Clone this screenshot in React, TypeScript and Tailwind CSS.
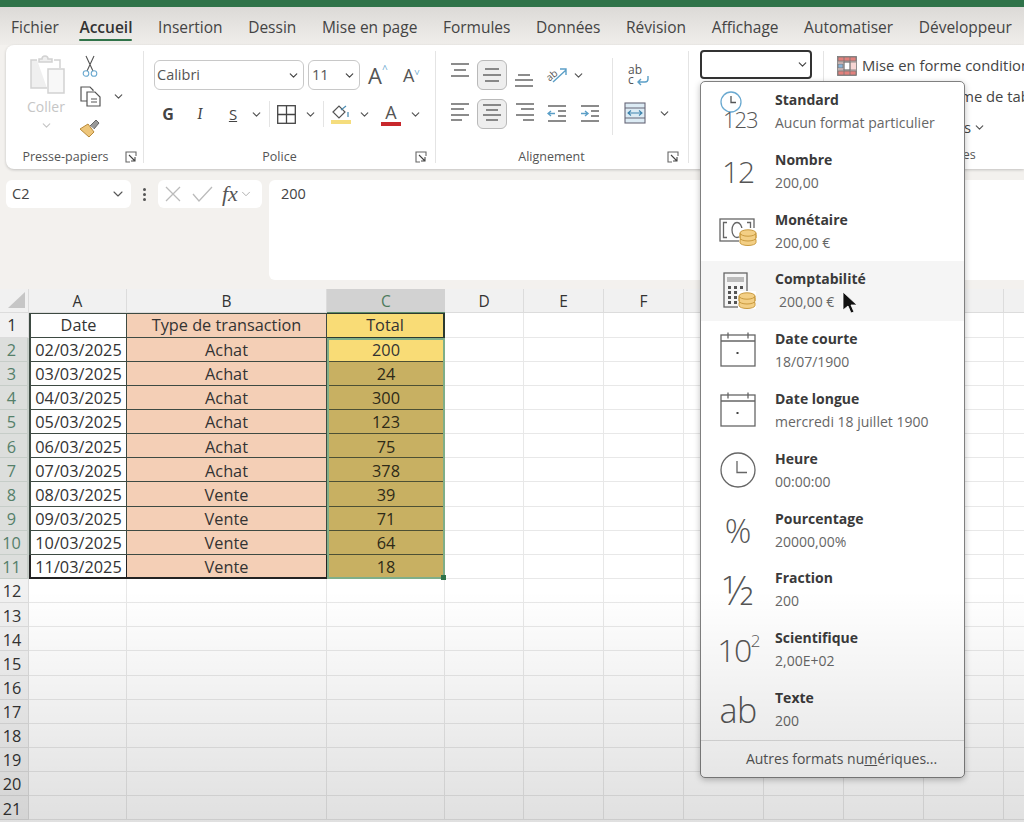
import { ChevronDown } from "lucide-react";

const Chev = ({ className = "text-[#555]" }: { className?: string }) => (
  <ChevronDown size={13} strokeWidth={2.2} className={className} />
);

const Launcher = () => (
  <svg width="12" height="12" viewBox="0 0 12 12" fill="none" stroke="#666" strokeWidth="1.1">
    <path d="M5 1H1v10h4M1 1h10v4" />
    <path d="M4 4l6 6M10 6v4H6" stroke="#444" />
  </svg>
);

// horizontal bars used by the alignment buttons
const Bars = ({ rows, color = "#666" }: { rows: number[][]; color?: string }) => (
  <svg width="20" height="30" viewBox="0 0 20 30" stroke={color} strokeWidth="1.4">
    {rows.map((r, i) => (
      <line key={i} x1={r[0]} x2={r[1]} y1={r[2]} y2={r[2]} />
    ))}
  </svg>
);

const Coins = ({ x, y }: { x: number; y: number }) => (
  <g transform={`translate(${x} ${y})`} fill="#f3cf85" stroke="#c99a3f" strokeWidth="1">
    <path d="M0 13.5a8 3 0 0 0 16 0v-3H0z" />
    <path d="M0 9a8 3 0 0 0 16 0V5.500H0z" />
    <ellipse cx="8" cy="4" rx="8" ry="3.200" />
    <path d="M0 4v5M16 4v5" fill="none" />
  </g>
);

const CalendarIcon = () => (
  <svg width="36" height="36" viewBox="0 0 36 36" fill="none" stroke="#666" strokeWidth="1.300" className="-mt-[2px]">
    <rect x="1" y="3" width="34" height="31" />
    <path d="M1 9h34M8 0.500v6M28 0.500v6" />
    <rect x="16.500" y="20" width="2" height="2" fill="#444" stroke="none" />
  </svg>
);

const CalcIcon = () => (
  <svg width="36" height="38" viewBox="0 0 36 38" fill="none">
    <rect x="4" y="1" width="23" height="34" stroke="#666" strokeWidth="1.300" />
    <rect x="7" y="5" width="17" height="5" fill="#bbb" />
    {[14, 19, 24, 29].map((y) =>
      [8, 14, 20].map((x) => <rect key={`${x}-${y}`} x={x} y={y} width="3" height="3" fill="#555" />)
    )}
    <rect x="18" y="19" width="18" height="18" fill="#fff" />
    <Coins x={19} y={20} />
  </svg>
);

const NoteIcon = () => (
  <svg width="38" height="30" viewBox="0 0 38 30" fill="none">
    <rect x="1" y="3" width="34" height="22" stroke="#666" strokeWidth="1.300" />
    <path d="M8 6.500H4.500v15H8M28 6.500h3.500v15H28" stroke="#666" strokeWidth="1.300" />
    <ellipse cx="18" cy="14" rx="5" ry="7.500" stroke="#666" strokeWidth="1.300" />
    <rect x="20" y="12" width="18" height="18" fill="#fff" />
    <Coins x={21} y={13} />
  </svg>
);

const formats = [
  { t: "Standard", s: "Aucun format particulier" },
  { t: "Nombre", s: "200,00" },
  { t: "Monétaire", s: "200,00 €" },
  { t: "Comptabilité", s: "200,00 €", hover: true },
  { t: "Date courte", s: "18/07/1900" },
  { t: "Date longue", s: "mercredi 18 juillet 1900" },
  { t: "Heure", s: "00:00:00" },
  { t: "Pourcentage", s: "20000,00%" },
  { t: "Fraction", s: "200" },
  { t: "Scientifique", s: "2,00E+02" },
  { t: "Texte", s: "200" },
];

const FormatIcon = ({ name }: { name: string }) => {
  const big = "font-light text-[#555] leading-none";
  switch (name) {
    case "Standard":
      return (
        <div className="relative w-[40px] h-[44px] mt-[2px]">
          <svg width="24" height="24" viewBox="0 0 24 24" fill="none" stroke="#6aa9d0" strokeWidth="1.300" className="absolute left-[2px] top-0">
            <circle cx="11" cy="11" r="10" />
            <path d="M11 5v6.500h5" stroke="#555" />
          </svg>
          <span className={`absolute left-[5px] top-[17px] text-[22px] tracking-[-1px] ${big}`}>123</span>
        </div>
      );
    case "Nombre":
      return <span className={`text-[30px] tracking-[-1px] ${big}`}>12</span>;
    case "Monétaire":
      return <NoteIcon />;
    case "Comptabilité":
      return <CalcIcon />;
    case "Date courte":
    case "Date longue":
      return <CalendarIcon />;
    case "Heure":
      return (
        <svg width="36" height="36" viewBox="0 0 36 36" fill="none" stroke="#666" strokeWidth="1.300" className="-mt-[2px]">
          <circle cx="18" cy="18" r="17" />
          <path d="M17 9v11.500h10" />
        </svg>
      );
    case "Pourcentage":
      return <span className={`text-[33px] ${big}`}>%</span>;
    case "Fraction":
      return <span className={`text-[40px] ${big}`}>½</span>;
    case "Scientifique":
      return (
        <span className={`text-[32px] tracking-[-1.500px] ${big}`}>
          10<sup className="text-[17px] -top-[15px] relative align-baseline">2</sup>
        </span>
      );
    default:
      return <span className={`text-[34px] tracking-[-0.500px] ${big}`}>ab</span>;
  }
};

const tabs = ["Fichier", "Accueil", "Insertion", "Dessin", "Mise en page", "Formules", "Données", "Révision", "Affichage", "Automatiser", "Développeur"];

const rows = [
  ["02/03/2025", "Achat", "200"],
  ["03/03/2025", "Achat", "24"],
  ["04/03/2025", "Achat", "300"],
  ["05/03/2025", "Achat", "123"],
  ["06/03/2025", "Achat", "75"],
  ["07/03/2025", "Achat", "378"],
  ["08/03/2025", "Vente", "39"],
  ["09/03/2025", "Vente", "71"],
  ["10/03/2025", "Vente", "64"],
  ["11/03/2025", "Vente", "18"],
];

const extraCols = [0, 1, 2, 3, 4, 5, 6, 7];

function Ribbon() {
  const sep = <div className="self-center w-px h-[112px] bg-[#e4e4e4] shrink-0" />;
  const label = "flex-1 text-center text-[12.500px] text-[#555]";
  return (
    <div className="ml-[6px] h-[124px] bg-white rounded-l-lg flex shadow-[0_1px_3px_rgba(0,0,0,0.2)] overflow-hidden shrink-0">
      {/* Presse-papiers */}
      <div className="w-[137px] shrink-0 flex flex-col">
        <div className="flex h-[100px]">
          <div className="w-[70px] pl-[10px] pt-[10px] flex flex-col items-center">
            <svg width="36" height="40" viewBox="0 0 36 40" fill="none" stroke="#d2d2d2" strokeWidth="1.500" className="ml-[3px]">
              <path d="M7 5H1v28h16" fill="#efefef" />
              <path d="M24 5h6v8" />
              <path d="M9 7V4h3a3 3 0 0 1 6 0h4v3z" fill="#efefef" />
              <rect x="18" y="14" width="16" height="24" fill="#f8f8f8" />
            </svg>
            <span className="text-[14px] text-[#c6c6c6] mt-[2px] leading-[20px]">Coller</span>
            <Chev className="text-[#c6c6c6] mt-[2px]" />
          </div>
          <div className="flex flex-col pt-[5px]">
            <div className="h-[31px] w-[28px] flex items-center justify-center">
              <svg width="16" height="22" viewBox="0 0 16 22" fill="none" stroke="#555" strokeWidth="1.100">
                <path d="M4 1l7 15M12 1L5 16" />
                <circle cx="4" cy="18.500" r="2.800" stroke="#6aa9d0" />
                <circle cx="12" cy="18.500" r="2.800" stroke="#6aa9d0" />
              </svg>
            </div>
            <div className="h-[31px] flex items-center">
              <div className="w-[28px] flex justify-center">
                <svg width="21" height="21" viewBox="0 0 21 21" fill="none" stroke="#555" strokeWidth="1.200">
                  <path d="M7 15H1V1h9l3 3v1" />
                  <path d="M7 6h8l5 5v9H7z" fill="#fff" />
                  <path d="M11 13h6M11 16h6" />
                </svg>
              </div>
              <div className="w-[12px] ml-[8px]"><Chev /></div>
            </div>
            <div className="h-[31px] w-[28px] flex items-center justify-center">
              <svg width="22" height="20" viewBox="0 0 22 20" fill="none">
                <path d="M1 11l8-5 6 8-5 5z" fill="#eec67a" stroke="#b8893a" />
                <path d="M11 8l6-6 3 3-5 6" fill="#999" stroke="#666" />
              </svg>
            </div>
          </div>
        </div>
        <div className="h-[24px] flex items-center">
          <span className={label}>Presse-papiers</span>
          <div className="w-[18px]"><Launcher /></div>
        </div>
      </div>
      {sep}
      {/* Police */}
      <div className="w-[291px] shrink-0 flex flex-col">
        <div className="pl-[10px] pt-[15px] h-[100px]">
          <div className="flex items-center h-[30px]">
            <div className="w-[150px] h-[30px] border border-[#c8c8c8] rounded-md flex items-center justify-between pl-[2px] pr-[3px] text-[14.500px] text-[#555]">
              Calibri <Chev className="text-[#444]" />
            </div>
            <div className="w-[52px] h-[30px] ml-[4px] border border-[#c8c8c8] rounded-md flex items-center justify-between pl-[3px] pr-[3px] text-[14.500px] text-[#555]">
              11 <Chev className="text-[#444]" />
            </div>
            <div className="w-[22px] ml-[8px] flex items-start text-[#555] text-[22px] leading-none">
              A<span className="text-[#6aa9d0] text-[10px]">^</span>
            </div>
            <div className="w-[20px] ml-[13px] flex items-start text-[#555] text-[18px] leading-none">
              A<span className="text-[#6aa9d0] text-[10px] rotate-180">^</span>
            </div>
          </div>
          <div className="flex items-center h-[30px] mt-[9px] text-[#444]">
            <div className="w-[28px] text-center text-[16px] font-bold">G</div>
            <div className="w-[28px] ml-[4px] text-center text-[16px] italic font-serif">I</div>
            <div className="w-[28px] ml-[5px] text-center text-[15px] underline">S</div>
            <div className="w-[12px] ml-[3px]"><Chev /></div>
            <div className="w-px h-[26px] ml-[7px] bg-[#e4e4e4]" />
            <svg width="19" height="19" viewBox="0 0 19 19" fill="none" stroke="#444" strokeWidth="1.300" className="ml-[7px]">
              <rect x="0.700" y="0.700" width="17.600" height="17.600" />
              <path d="M9.500 1v17M1 9.500h17" />
            </svg>
            <div className="w-[12px] ml-[8px]"><Chev /></div>
            <div className="w-px h-[26px] ml-[7px] bg-[#e4e4e4]" />
            <svg width="20" height="22" viewBox="0 0 20 22" fill="none" className="ml-[7px]">
              <path d="M2 9l6-6 6 6-6 6z" stroke="#555" strokeWidth="1.200" />
              <path d="M10 7l5-4" stroke="#4d8fb5" strokeWidth="1.300" />
              <path d="M17 9v5" stroke="#4d8fb5" strokeWidth="1.300" />
              <rect x="0" y="17" width="20" height="4" fill="#f5dd7d" />
            </svg>
            <div className="w-[12px] ml-[7px]"><Chev /></div>
            <div className="w-[20px] ml-[11px] flex flex-col items-center text-[18px] leading-[19px] text-[#555]">
              A
              <div className="w-[20px] h-[4px] bg-[#c8272c]" />
            </div>
            <div className="w-[12px] ml-[8px]"><Chev /></div>
          </div>
        </div>
        <div className="h-[24px] flex items-center">
          <span className={label}>Police</span>
          <div className="w-[20px]"><Launcher /></div>
        </div>
      </div>
      {sep}
      {/* Alignement */}
      <div className="w-[252px] shrink-0 flex flex-col">
        <div className="h-[100px] flex">
          <div className="w-[176px] pl-[14px] pt-[15px] shrink-0">
            <div className="flex items-center h-[30px]">
              <Bars rows={[[1, 19, 4], [4, 16, 10], [1, 19, 16]]} />
              <div className="w-[30px] h-[30px] ml-[7px] bg-[#eeeeee] border border-[#b9b9b9] rounded-md flex justify-center">
                <Bars rows={[[3, 17, 8], [1, 19, 14], [3, 17, 20]]} />
              </div>
              <div className="ml-[7px]"><Bars rows={[[4, 16, 15], [1, 19, 20], [1, 19, 26]]} /></div>
              <svg width="24" height="24" viewBox="0 0 24 24" fill="none" className="ml-[11px]">
                <text x="1" y="15" fontSize="10" fill="#555" transform="rotate(-40 8 12)" fontFamily="Open Sans">ab</text>
                <path d="M8 19L21 7M15 6h6v6" stroke="#5b9fc7" strokeWidth="1.400" />
              </svg>
              <div className="w-[12px] ml-[3px]"><Chev /></div>
            </div>
            <div className="flex items-center h-[30px] mt-[9px]">
              <Bars rows={[[1, 19, 5], [1, 14, 10], [1, 19, 16], [1, 12, 21]]} />
              <div className="w-[30px] h-[30px] ml-[7px] bg-[#eeeeee] border border-[#b9b9b9] rounded-md flex justify-center">
                <Bars rows={[[1, 19, 5], [4, 16, 10], [1, 19, 15], [4, 16, 20]]} />
              </div>
              <div className="ml-[8px]"><Bars rows={[[1, 19, 5], [6, 19, 10], [1, 19, 16], [8, 19, 21]]} /></div>
              <svg width="20" height="20" viewBox="0 0 20 20" fill="none" stroke="#666" strokeWidth="1.400" className="ml-[12px]">
                <path d="M1 2h18M11 7h8M11 12h8M1 17h18" />
                <path d="M8 9.500H1M4 7L1 9.500 4 12" stroke="#5b9fc7" />
              </svg>
              <svg width="20" height="20" viewBox="0 0 20 20" fill="none" stroke="#666" strokeWidth="1.400" className="ml-[13px]">
                <path d="M1 2h18M11 7h8M11 12h8M1 17h18" />
                <path d="M1 9.500h7M5 7l3 2.500L5 12" stroke="#5b9fc7" />
              </svg>
            </div>
          </div>
          <div className="w-px h-[77px] mt-[13px] bg-[#e4e4e4] shrink-0" />
          <div className="pl-[11px] pt-[20px]">
            <div className="h-[24px] w-[24px] ml-[4px] text-[12px] leading-[10px] text-[#555] relative">
              ab
              <br />c
              <svg width="14" height="12" viewBox="0 0 14 12" fill="none" stroke="#5b9fc7" strokeWidth="1.400" className="absolute left-[8px] top-[10px]">
                <path d="M12 1v3a3 3 0 0 1-3 3H2M5 4L2 7l3 3" />
              </svg>
            </div>
            <div className="flex items-center mt-[12px] h-[24px]">
              <svg width="22" height="22" viewBox="0 0 22 22" fill="#dcebf4" stroke="#667" strokeWidth="1.100">
                <rect x="1" y="1" width="20" height="20" />
                <path d="M1 6h20M1 16h20" />
                <path d="M4 11h14M7 8.500L4 11l3 2.500M15 8.500l3 2.500-3 2.500" stroke="#3d83ad" fill="none" />
              </svg>
              <div className="w-[12px] ml-[12px]"><Chev /></div>
            </div>
          </div>
        </div>
        <div className="h-[24px] flex items-center">
          <span className={label}>Alignement</span>
          <div className="w-[21px]"><Launcher /></div>
        </div>
      </div>
      {sep}
      {/* Nombre */}
      <div className="w-[134px] shrink-0 pl-[11px] pt-[5px]">
        <div className="w-[112px] h-[29px] border-2 border-[#333] rounded-[4px] flex items-center justify-end pr-[1px] bg-white">
          <Chev className="text-[#444]" />
        </div>
      </div>
      {sep}
      {/* Styles */}
      <div className="flex-1 min-w-0 flex flex-col pl-[13px] pt-[5px] whitespace-nowrap text-[14.800px] text-[#444] overflow-hidden">
        <div className="h-[31px] flex items-center gap-[5px]">
          <svg width="20" height="20" viewBox="0 0 20 20" stroke="#777" strokeWidth="0.800" className="shrink-0">
            <rect x="0.500" y="0.500" width="19" height="19" fill="#f6d5d3" />
            <path d="M1 1h18v4H1zM1 15h18v4H1z" fill="#e2807c" />
            <path d="M7 6h6v8H7z" fill="#fff" />
            <path d="M1 8h5v4H1z" fill="#8ab4d8" />
            <path d="M7 1v18M13 1v18M1 6h18M1 14h18" fill="none" />
          </svg>
          <span>Mise en forme conditionnelle</span>
        </div>
        <div className="h-[31px] flex items-center pl-[17px]">Mettre sous forme de tableau</div>
        <div className="h-[31px] flex items-center gap-[2px] pl-[18px]">
          Styles de cellules <Chev />
        </div>
        <div className="h-[24px] flex items-center pl-[105px] text-[12.500px] text-[#555]">Styles</div>
      </div>
    </div>
  );
}

function FormulaBar() {
  return (
    <div className="flex mt-[11px] h-[100px] shrink-0">
      <div className="ml-[6px] w-[125px] h-[28px] bg-white rounded-md flex items-center justify-between pl-[6px] pr-[5px] text-[14.500px] text-[#444]">
        C2 <ChevronDown size={16} strokeWidth={1.600} className="text-[#555]" />
      </div>
      <div className="w-[27px] h-[28px] flex flex-col items-center justify-center gap-[2px]">
        <div className="w-[3px] h-[3px] rounded-full bg-[#555]" />
        <div className="w-[3px] h-[3px] rounded-full bg-[#555]" />
        <div className="w-[3px] h-[3px] rounded-full bg-[#555]" />
      </div>
      <div className="w-[104px] h-[28px] bg-white rounded-md flex items-center pl-[7px]">
        <svg width="16" height="16" viewBox="0 0 16 16" stroke="#bbb" strokeWidth="1.300" fill="none">
          <path d="M1 1l14 14M15 1L1 15" />
        </svg>
        <svg width="22" height="16" viewBox="0 0 22 16" stroke="#bbb" strokeWidth="1.300" fill="none" className="ml-[11px]">
          <path d="M1 8l6 7L20 1" />
        </svg>
        <span className="ml-[8px] font-['Liberation_Serif',serif] italic text-[22px] text-[#555] leading-none">fx</span>
        <ChevronDown size={14} strokeWidth={1.300} className="text-[#999] ml-[1px]" />
      </div>
      <div className="ml-[7px] flex-1 h-[100px] bg-white rounded-l-md pl-[12px] pt-[2px] text-[14.500px] text-[#444] leading-[24px]">200</div>
    </div>
  );
}

function Sheet() {
  const head = "flex items-center justify-center pt-[2px] bg-[#f1f1f1] border-r border-b border-[#dcdcdc] text-[15.500px] text-[#333]";
  const gridline = "border-r border-b border-[#e8e8e8]";
  const dark = "border-r border-b border-[#3d4a42]";
  return (
    <div className="relative mt-[9px] flex-1 content-start grid grid-cols-[29px_98px_200px_118px_79px_80px_80px_80px_80px_80px_80px_80px] grid-rows-[24px_24.600px] auto-rows-[24.150px] text-[16.300px] text-[#333] bg-white">
      <div className="bg-[#f1f1f1] border-r border-b border-[#dcdcdc] flex items-end justify-end pr-[3px] pb-[4px]">
        <div className="w-0 h-0 border-l-[17px] border-l-transparent border-b-[16px] border-b-[#c6c6c6]" />
      </div>
      <div className={head}>A</div>
      <div className={head}>B</div>
      <div className="flex items-center justify-center pt-[2px] bg-[#d2d2d2] border-b border-[#5c8a6a] text-[15.500px] text-[#4d7a5c]">C</div>
      {["D", "E", "F", "G", "H", "I", "J", "K"].map((c) => (
        <div key={c} className={head}>{c}</div>
      ))}

      <div className="flex items-center justify-center bg-[#f1f1f1] border-r border-b border-[#dcdcdc] pr-[4px]">1</div>
      <div className="flex items-center justify-center bg-white border-t border-l-2 border-r border-b border-[#3d4a42]">Date</div>
      <div className={`flex items-center justify-center bg-[#f4cfb6] border-t border-[#3d4a42] ${dark}`}>Type de transaction</div>
      <div className="flex items-center justify-center bg-[#f9dc76] border-t border-r-2 border-b border-[#2c3a30]">Total</div>
      {extraCols.map((c) => <div key={c} className={gridline} />)}

      {rows.map((r, i) => (
        <div key={r[0]} className="contents">
          <div className="flex items-center justify-center pt-[2px] bg-[#dcdedc] border-r-2 border-b border-[#c6cdc8] text-[#55806a] pr-[4px]">{i + 2}</div>
          <div className={`flex items-center justify-center pt-[2px] bg-white border-l-2 border-[#3d4a42] ${i === 9 ? "border-r border-b-2 border-[#222]" : dark}`}>{r[0]}</div>
          <div className={`flex items-center justify-center pt-[2px] bg-[#f4cfb6] ${i === 9 ? "border-r border-b-2 border-[#222]" : dark}`}>{r[1]}</div>
          <div className={`flex items-center justify-center pt-[2px] border-b border-[#4d5034] ${i === 0 ? "bg-[#f9dc76] text-[#333]" : "bg-[#c8b062] text-[#2e2a18]"}`}>{r[2]}</div>
          {extraCols.map((c) => <div key={c} className={gridline} />)}
        </div>
      ))}

      {Array.from({ length: 10 }, (_, i) => i + 12).map((n) => (
        <div key={n} className="contents">
          <div className="flex items-center justify-center pt-[2px] bg-[#f1f1f1] border-r border-b border-[#dcdcdc] pr-[4px]">{n}</div>
          <div className={gridline} />
          <div className={gridline} />
          <div className={gridline} />
          {extraCols.map((c) => <div key={c} className={gridline} />)}
        </div>
      ))}

      {/* selection round C2:C11 */}
      <div className="absolute left-[327px] top-[48.600px] w-[118px] h-[241.500px] border-2 border-[#7fae88] pointer-events-none">
        <div className="absolute -right-[3px] -bottom-[3px] w-[5px] h-[5px] bg-[#2f7349]" />
      </div>
    </div>
  );
}

function FormatMenu() {
  return (
    <div className="absolute left-[700px] top-[81px] w-[265px] h-[697px] bg-white border-[1.500px] border-[#808080] rounded-[5px] shadow-[0_2px_6px_rgba(0,0,0,0.25)] flex flex-col overflow-hidden">
      {formats.map((f) => (
        <div key={f.t} className={`h-[59.800px] shrink-0 flex ${f.hover ? "bg-[#f5f5f5]" : ""}`}>
          <div className="w-[74px] shrink-0 flex items-center justify-center">
            <FormatIcon name={f.t} />
          </div>
          <div className="pt-[8px]">
            <div className="font-bold text-[#3a3a3a] leading-[20px] text-[14px]">{f.t}</div>
            <div className={`text-[#666] leading-[20px] mt-[3px] text-[14px] ${f.hover ? "pl-[4px]" : ""}`}>{f.s}</div>
          </div>
        </div>
      ))}
      <div className="border-t border-[#dedede] flex-1 flex items-center justify-center pl-[18px] pb-[1px] text-[#555] text-[14px]">
        <span>
          Autres formats nu<span className="underline">m</span>ériques...
        </span>
      </div>
    </div>
  );
}

export default function App() {
  return (
    <div className="relative w-[1024px] h-[822px] overflow-hidden bg-[#f3f1ee] flex flex-col font-['Open_Sans','Noto_Sans',sans-serif]">
      <div className="h-[7px] bg-[#2f7349] shrink-0" />
      <div className="h-[38px] shrink-0 flex items-center gap-[25.600px] pl-[11px] pt-[3px] bg-linear-to-b from-[#dcdad7] to-[#f0eeeb] text-[15.500px] text-[#444] whitespace-nowrap">
        {tabs.map((t) =>
          t === "Accueil" ? (
            <div key={t} className="relative font-semibold text-[#333] ml-[-5px]">
              {t}
              <div className="absolute left-0 right-0 -bottom-[2px] h-[2px] bg-[#2f7349] rounded" />
            </div>
          ) : (
            <div key={t}>{t}</div>
          )
        )}
      </div>
      <Ribbon />
      <FormulaBar />
      <Sheet />
      <FormatMenu />
      {/* mouse pointer */}
      <svg width="16" height="24" viewBox="0 0 16 24" className="absolute left-[842px] top-[291px]">
        <path d="M1 1v18l5-4 3 7 3-1-3-7h6z" fill="#111" stroke="#fff" strokeWidth="0.800" />
      </svg>
      {/* video fade at the bottom of the frame */}
      <div className="absolute left-0 right-0 top-[590px] bottom-0 bg-linear-to-b from-transparent to-[rgba(0,0,0,0.12)] pointer-events-none" />
    </div>
  );
}
